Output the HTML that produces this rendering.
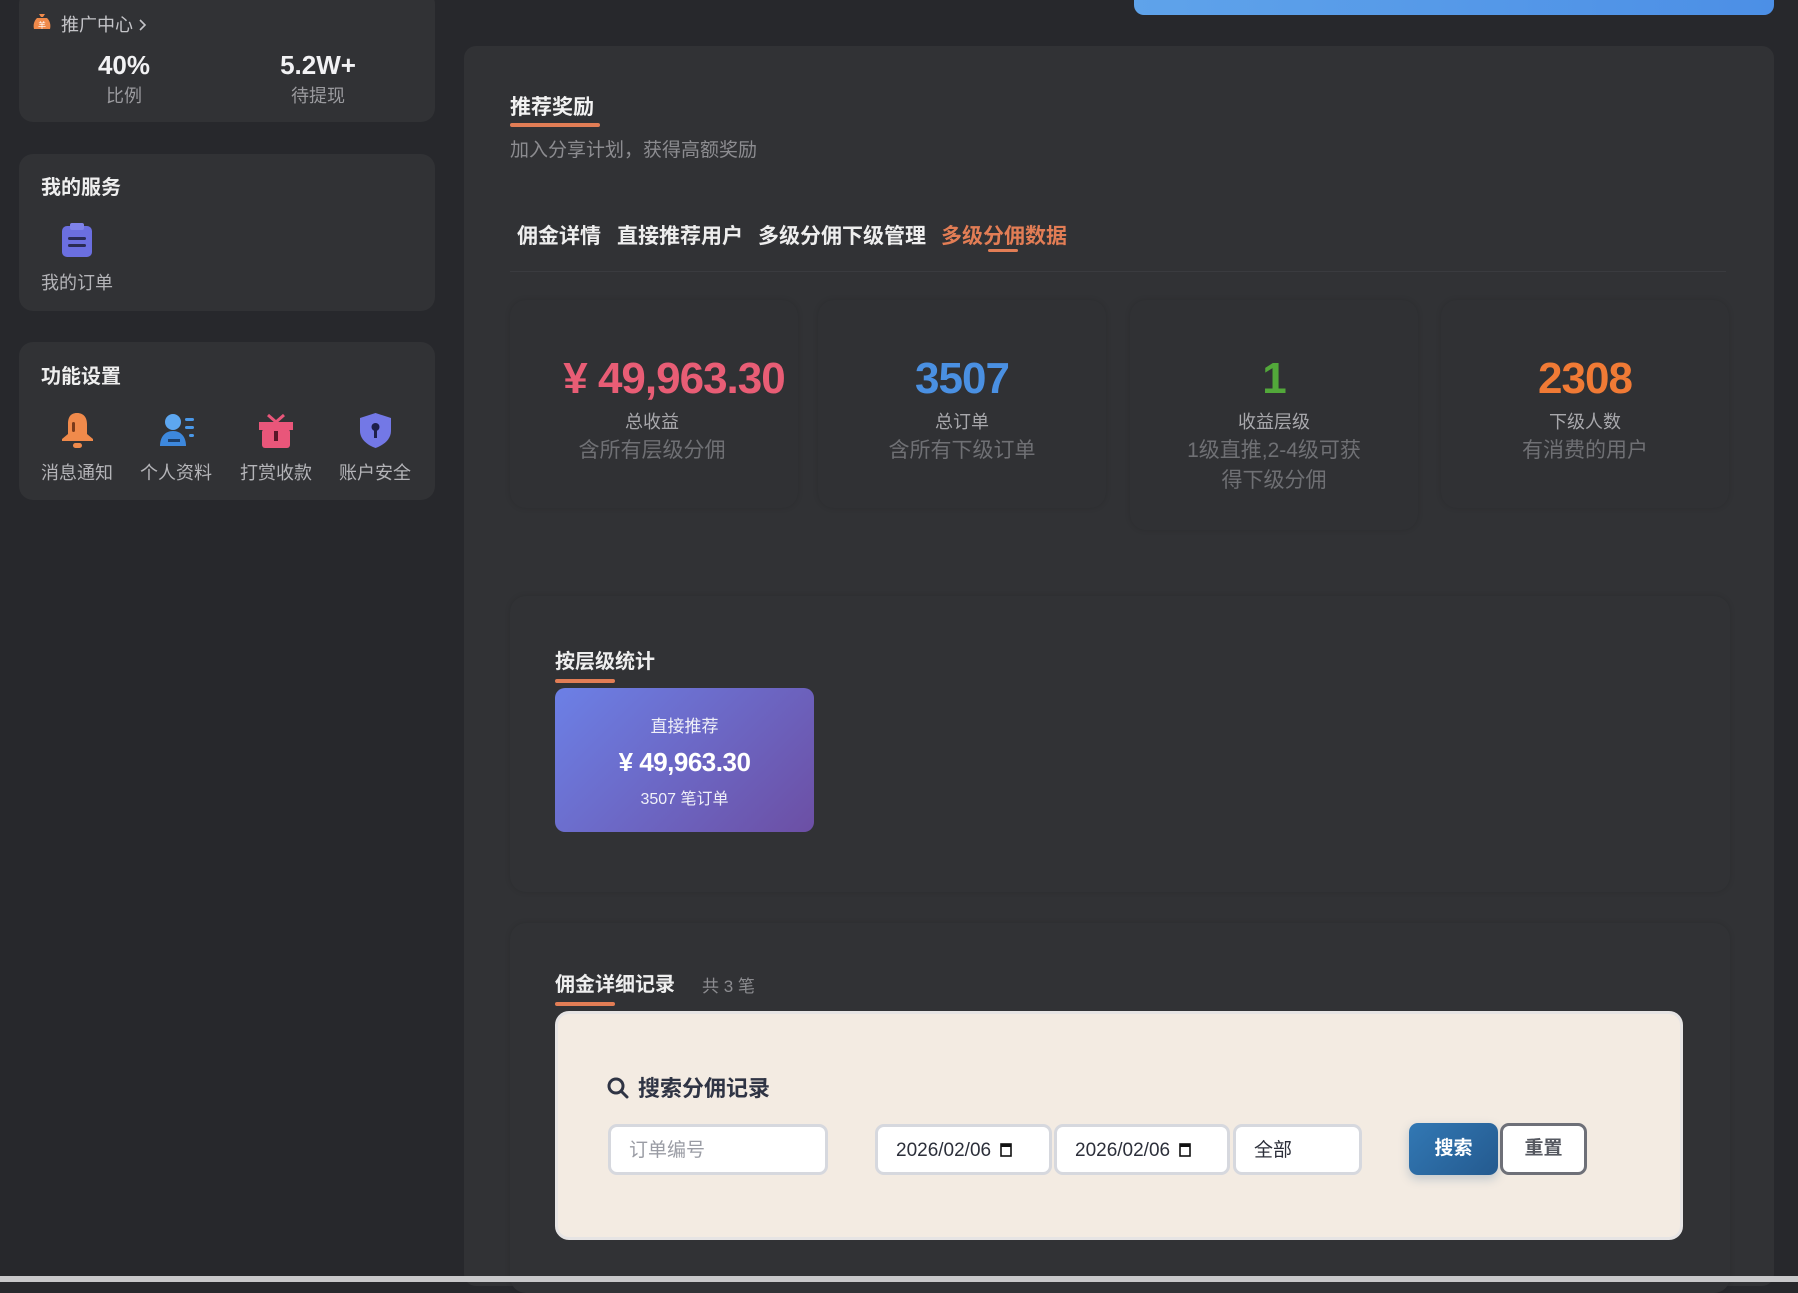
<!DOCTYPE html>
<html><head><meta charset="utf-8"><style>
*{box-sizing:border-box;margin:0;padding:0}
body{width:1798px;height:1282px;background:#27282c;font-family:"Liberation Sans","Noto Sans CJK SC",sans-serif;position:relative;overflow:hidden;color:#e8e8ea}
.a{position:absolute}
.card{position:absolute;background:#313235;border-radius:14px;left:19px;width:416px}
.c{text-align:center}
.stat{position:absolute;top:300px;height:208px;width:288px;border-radius:16px;background:#303134;box-shadow:0 0 6px rgba(0,0,0,.12);text-align:center}
.stat .n{position:absolute;left:0;right:0;top:54px;font-size:44px;font-weight:bold;letter-spacing:-1px}
.stat .l{position:absolute;left:0;right:0;top:108px;font-size:18px;color:#a8a8ac}
.stat .s{position:absolute;left:52px;right:52px;top:136px;font-size:21px;color:#6f7074;line-height:30px}
.inp{position:absolute;top:1124px;height:51px;background:#fff;border:3px solid #d6d8de;border-radius:9px;font-size:19px;color:#2c2f3a;padding-left:18px;line-height:48px}
.ul{position:absolute;height:4px;background:#e27d55;border-radius:2px}
.tab{position:absolute;top:220px;font-size:21px;font-weight:bold;color:#eee}
</style></head><body>
<div class="card" style="top:-10px;height:132px"></div>
<div class="a" style="left:33px;top:13px;width:18px;height:18px"><svg width="18" height="18" viewBox="0 0 18 18"><path d="M6 1h6l-2 3h-2z" fill="#f08a4b"/><path d="M4 5h10c3 3 4 7 3 11H1C0 12 1 8 4 5z" fill="#f08a4b"/><text x="9" y="15" font-size="8" fill="#fff" text-anchor="middle" font-family="Noto Sans CJK SC">羊</text></svg></div>
<div class="a" style="left:61px;top:11px;font-size:18px;color:#c4c4c8">推广中心 <svg width="10" height="14" viewBox="0 0 10 14" style="vertical-align:-1px"><path d="M2 2l5 5-5 5" stroke="#c4c4c8" stroke-width="1.6" fill="none"/></svg></div>
<div class="a c" style="left:74px;width:100px;top:50px;font-size:26px;font-weight:bold;color:#f2f2f4">40%</div>
<div class="a c" style="left:74px;width:100px;top:82px;font-size:18px;color:#9a9a9e">比例</div>
<div class="a c" style="left:258px;width:120px;top:50px;font-size:26px;font-weight:bold;color:#f2f2f4">5.2W+</div>
<div class="a c" style="left:258px;width:120px;top:82px;font-size:18px;color:#9a9a9e">待提现</div>

<div class="card" style="top:154px;height:157px"></div>
<div class="a" style="left:41px;top:171px;font-size:20px;font-weight:bold;color:#eee">我的服务</div>
<div class="a" style="left:62px;top:223px"><svg width="30" height="35" viewBox="0 0 30 35"><rect x="0" y="3" width="30" height="31" rx="5" fill="#6b6fe0"/><rect x="8" y="0" width="14" height="7" rx="2" fill="#7f83ea"/><rect x="6" y="14" width="18" height="3" rx="1.5" fill="#2a2c55"/><rect x="6" y="21" width="18" height="3" rx="1.5" fill="#2a2c55"/></svg></div>
<div class="a" style="left:41px;top:269px;font-size:18px;color:#b4b4b8">我的订单</div>

<div class="card" style="top:342px;height:158px"></div>
<div class="a" style="left:41px;top:360px;font-size:20px;font-weight:bold;color:#eee">功能设置</div>
<div class="a" style="left:61px;top:413px"><svg width="33" height="35" viewBox="0 0 33 35"><path d="M16 0c-7 0-9 5-9 11v10l-6 5v2h31v-2l-6-5V11C26 5 23 0 16 0z" fill="#f08a4b"/><rect x="12" y="30" width="9" height="5" rx="2.5" fill="#f08a4b"/><rect x="11" y="9" width="3" height="10" rx="1.5" fill="#7a3a1a"/></svg></div>
<div class="a" style="left:160px;top:413px"><svg width="35" height="33" viewBox="0 0 35 33"><circle cx="13" cy="9" r="8" fill="#5da7f0"/><path d="M0 33c0-9 5-15 13-15s13 6 13 15z" fill="#3d88dd"/><rect x="8" y="26" width="12" height="3" fill="#1d3f6a"/><rect x="25" y="5" width="9" height="3" rx="1.5" fill="#4a98e8"/><rect x="25" y="13" width="9" height="3" rx="1.5" fill="#4a98e8"/><rect x="29" y="21" width="5" height="3" rx="1.5" fill="#4a98e8"/></svg></div>
<div class="a" style="left:259px;top:413px"><svg width="34" height="35" viewBox="0 0 34 35"><path d="M9 2l8 7 8-7" stroke="#e9567a" stroke-width="3" fill="none"/><rect x="0" y="9" width="34" height="8" fill="#e9567a"/><rect x="3" y="16" width="28" height="19" rx="3" fill="#e9567a"/><rect x="15" y="18" width="4" height="10" fill="#5a1628"/></svg></div>
<div class="a" style="left:360px;top:413px"><svg width="31" height="35" viewBox="0 0 31 35"><path d="M15.5 0L31 5v13c0 8-7 14-15.5 17C7 32 0 26 0 18V5z" fill="#7378e6"/><circle cx="15.5" cy="14" r="4" fill="#1e1f4a"/><rect x="14" y="15" width="3" height="10" fill="#1e1f4a"/></svg></div>
<div class="a" style="left:41px;top:459px;font-size:18px;color:#b4b4b8">消息通知</div>
<div class="a" style="left:140px;top:459px;font-size:18px;color:#b4b4b8">个人资料</div>
<div class="a" style="left:240px;top:459px;font-size:18px;color:#b4b4b8">打赏收款</div>
<div class="a" style="left:339px;top:459px;font-size:18px;color:#b4b4b8">账户安全</div>

<div class="a" style="left:1134px;top:0;width:640px;height:15px;border-radius:0 0 10px 10px;background:linear-gradient(90deg,#5fa3ea,#4c8fe6)"></div>

<div class="a" style="left:464px;top:46px;width:1310px;height:1240px;background:#313235;border-radius:12px"></div>
<div class="a" style="left:510px;top:91px;font-size:21px;font-weight:bold;color:#f2f2f2">推荐奖励</div>
<div class="ul" style="left:510px;top:123px;width:90px"></div>
<div class="a" style="left:510px;top:135px;font-size:19px;color:#8c8c90">加入分享计划，获得高额奖励</div>
<div class="tab" style="left:517px">佣金详情</div>
<div class="tab" style="left:617px">直接推荐用户</div>
<div class="tab" style="left:758px">多级分佣下级管理</div>
<div class="tab" style="left:941px;color:#e27d55">多级分佣数据</div>
<div class="ul" style="left:988px;top:249px;width:30px;height:3px"></div>
<div class="a" style="left:510px;top:271px;width:1216px;height:1px;background:#3a3b3f"></div>

<div class="stat" style="left:510px"><div class="n" style="color:#e85d75;left:40px">¥ 49,963.30</div><div class="l" style="right:4px">总收益</div><div class="s" style="left:10px;right:14px">含所有层级分佣</div></div>
<div class="stat" style="left:818px"><div class="n" style="color:#4a90e2">3507</div><div class="l">总订单</div><div class="s" style="left:10px;right:10px">含所有下级订单</div></div>
<div class="stat" style="left:1130px;height:230px"><div class="n" style="color:#52a83a">1</div><div class="l">收益层级</div><div class="s">1级直推,2-4级可获得下级分佣</div></div>
<div class="stat" style="left:1441px"><div class="n" style="color:#f07a35">2308</div><div class="l">下级人数</div><div class="s" style="left:10px;right:10px">有消费的用户</div></div>

<div class="a" style="left:510px;top:596px;width:1220px;height:296px;border-radius:16px;background:#313235;box-shadow:0 0 6px rgba(0,0,0,.12)"></div>
<div class="a" style="left:555px;top:645px;font-size:20px;font-weight:bold;color:#eee">按层级统计</div>
<div class="ul" style="left:555px;top:679px;width:60px"></div>
<div class="a c" style="left:555px;top:688px;width:259px;height:144px;border-radius:10px;background:linear-gradient(135deg,#6c80e6,#6c4fa4)">
<div style="margin-top:24px;font-size:17px;color:#f0f0f8">直接推荐</div>
<div style="margin-top:10px;font-size:26px;font-weight:bold;color:#fff;letter-spacing:-.5px">¥ 49,963.30</div>
<div style="margin-top:7px;font-size:16px;color:#f0f0f8">3507 笔订单</div></div>

<div class="a" style="left:510px;top:923px;width:1220px;height:370px;border-radius:16px;background:#313235;box-shadow:0 0 6px rgba(0,0,0,.12)"></div>
<div class="a" style="left:555px;top:968px;font-size:20px;font-weight:bold;color:#eee">佣金详细记录</div>
<div class="a" style="left:702px;top:972px;font-size:17px;color:#8c8c90">共 3 笔</div>
<div class="ul" style="left:555px;top:1002px;width:60px"></div>
<div class="a" style="left:555px;top:1011px;width:1128px;height:229px;background:#f3ebe2;border:3px solid #e6e4e4;border-radius:14px"></div>
<div class="a" style="left:607px;top:1077px"><svg width="22" height="22" viewBox="0 0 22 22"><circle cx="9" cy="9" r="7" stroke="#2f3444" stroke-width="3" fill="none"/><path d="M14 14l6 6" stroke="#2f3444" stroke-width="3" stroke-linecap="round"/></svg></div>
<div class="a" style="left:638px;top:1071px;font-size:22px;font-weight:bold;color:#2f3444">搜索分佣记录</div>
<div class="inp" style="left:608px;width:220px;color:#9a9ca4">订单编号</div>
<div class="inp" style="left:875px;width:177px">2026/02/06 <svg width="12" height="15" viewBox="0 0 12 15" style="vertical-align:-1px;margin-left:4px"><rect x="1" y="2" width="10" height="12" fill="none" stroke="#111" stroke-width="1.6"/><rect x="1" y="2" width="10" height="3" fill="#111"/></svg></div>
<div class="inp" style="left:1054px;width:176px">2026/02/06 <svg width="12" height="15" viewBox="0 0 12 15" style="vertical-align:-1px;margin-left:4px"><rect x="1" y="2" width="10" height="12" fill="none" stroke="#111" stroke-width="1.6"/><rect x="1" y="2" width="10" height="3" fill="#111"/></svg></div>
<div class="inp" style="left:1233px;width:129px">全部</div>
<div class="a c" style="left:1409px;top:1123px;width:89px;height:52px;border-radius:9px;background:linear-gradient(135deg,#3278b4,#245a8f);color:#fff;font-weight:bold;font-size:19px;line-height:52px;box-shadow:0 4px 10px rgba(40,90,140,.25)">搜索</div>
<div class="a c" style="left:1500px;top:1123px;width:87px;height:52px;border-radius:9px;background:#fff;border:3px solid #6e7078;color:#555860;font-weight:bold;font-size:19px;line-height:46px">重置</div>
<div class="a" style="left:0;top:1276px;width:1798px;height:6px;background:#c8c8ca"></div>
</body></html>
